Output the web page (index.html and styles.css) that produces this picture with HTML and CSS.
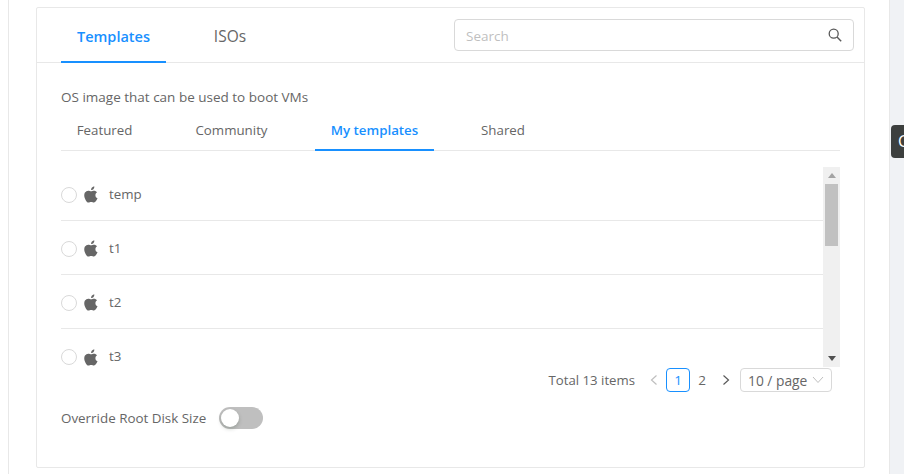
FILE: index.html
```html
<!DOCTYPE html>
<html lang="en">
<head>
<meta charset="utf-8">
<title>Templates</title>
<link rel="stylesheet" href="styles.css">
</head>
<body>
<div class="page">
  <main class="main">
    <section class="card">
      <header class="card-head">
        <nav class="top-tabs">
          <a class="top-tab active">Templates</a>
          <a class="top-tab">ISOs</a>
        </nav>
        <div class="search">
          <span class="search-text">Search</span>
          <svg class="search-icon" width="14" height="14" viewBox="0 0 14 14"><circle cx="5.7" cy="5.7" r="4.5" fill="none" stroke="#595959" stroke-width="1.3"/><path d="M9 9l4.2 4.2" stroke="#595959" stroke-width="1.4" fill="none"/></svg>
        </div>
      </header>
      <div class="card-body">
        <p class="desc">OS image that can be used to boot VMs</p>
        <nav class="sub-tabs">
          <a class="sub-tab t1">Featured</a>
          <a class="sub-tab t2">Community</a>
          <a class="sub-tab t3 active">My templates</a>
          <a class="sub-tab t4">Shared</a>
        </nav>
        <div class="list-wrap">
          <ul class="list">
            <li class="row"><span class="radio"></span><svg class="apple" viewBox="0.5 0 15 18" preserveAspectRatio="none"><path d="M11.6 0.4c.1 1-.3 2-.9 2.700-.6.7-1.600 1.300-2.600 1.200-.1-1 .4-2 .9-2.600.6-.7 1.700-1.300 2.600-1.300zM15 13c-.4 1-.6 1.400-1.100 2.200-.7 1.100-1.700 2.400-2.900 2.400-1.100 0-1.300-.7-2.800-.7-1.500 0-1.800.7-2.900.7-1.200 0-2.100-1.200-2.800-2.300C.5 12.300 .3 8.800 1.500 7 2.400 5.700 3.700 4.900 5 4.900c1.300 0 2.100.7 3.200.7 1 0 1.700-.7 3.200-.7 1.100 0 2.300.6 3.200 1.700-2.800 1.500-2.300 5.400.4 6.400z" fill="#666"/></svg><span class="name">temp</span></li>
            <li class="row"><span class="radio"></span><svg class="apple" viewBox="0.5 0 15 18" preserveAspectRatio="none"><path d="M11.6 0.4c.1 1-.3 2-.9 2.700-.6.7-1.600 1.300-2.600 1.200-.1-1 .4-2 .9-2.600.6-.7 1.700-1.300 2.600-1.300zM15 13c-.4 1-.6 1.400-1.100 2.200-.7 1.100-1.700 2.400-2.900 2.400-1.100 0-1.300-.7-2.800-.7-1.500 0-1.800.7-2.900.7-1.200 0-2.100-1.200-2.800-2.300C.5 12.300 .3 8.800 1.500 7 2.400 5.700 3.700 4.900 5 4.900c1.300 0 2.100.7 3.200.7 1 0 1.700-.7 3.200-.7 1.100 0 2.300.6 3.200 1.700-2.800 1.500-2.300 5.400.4 6.400z" fill="#666"/></svg><span class="name">t1</span></li>
            <li class="row"><span class="radio"></span><svg class="apple" viewBox="0.5 0 15 18" preserveAspectRatio="none"><path d="M11.6 0.4c.1 1-.3 2-.9 2.700-.6.7-1.600 1.300-2.600 1.200-.1-1 .4-2 .9-2.600.6-.7 1.700-1.300 2.600-1.300zM15 13c-.4 1-.6 1.400-1.100 2.200-.7 1.100-1.700 2.400-2.900 2.400-1.100 0-1.300-.7-2.800-.7-1.500 0-1.800.7-2.900.7-1.200 0-2.100-1.200-2.800-2.300C.5 12.300 .3 8.800 1.500 7 2.400 5.700 3.700 4.900 5 4.900c1.300 0 2.100.7 3.200.7 1 0 1.700-.7 3.200-.7 1.100 0 2.300.6 3.200 1.700-2.800 1.500-2.300 5.400.4 6.400z" fill="#666"/></svg><span class="name">t2</span></li>
            <li class="row"><span class="radio"></span><svg class="apple" viewBox="0.5 0 15 18" preserveAspectRatio="none"><path d="M11.6 0.4c.1 1-.3 2-.9 2.700-.6.7-1.600 1.300-2.600 1.200-.1-1 .4-2 .9-2.600.6-.7 1.700-1.300 2.600-1.300zM15 13c-.4 1-.6 1.400-1.100 2.200-.7 1.100-1.700 2.400-2.900 2.400-1.100 0-1.300-.7-2.800-.7-1.500 0-1.800.7-2.900.7-1.200 0-2.100-1.200-2.800-2.300C.5 12.300 .3 8.800 1.500 7 2.400 5.700 3.700 4.900 5 4.900c1.300 0 2.100.7 3.200.7 1 0 1.700-.7 3.200-.7 1.100 0 2.300.6 3.200 1.700-2.800 1.500-2.300 5.400.4 6.400z" fill="#666"/></svg><span class="name">t3</span></li>
          </ul>
          <div class="scrollbar">
            <span class="arrow up"></span>
            <span class="thumb"></span>
            <span class="arrow down"></span>
          </div>
        </div>
        <div class="pagination">
          <span class="total">Total 13 items</span>
          <svg class="chev prev" width="10" height="12" viewBox="0 0 10 12"><path d="M7.500 1.500L2.500 6l5 4.500" fill="none" stroke="#bfbfbf" stroke-width="1.200"/></svg>
          <span class="page-num current">1</span>
          <span class="page-num">2</span>
          <svg class="chev next" width="10" height="12" viewBox="0 0 10 12"><path d="M2.500 1.500L7.500 6l-5 4.500" fill="none" stroke="#595959" stroke-width="1.200"/></svg>
          <span class="size-select">10 / page<svg width="12" height="8" viewBox="0 0 12 8"><path d="M1 1l5 5.500L11 1" fill="none" stroke="#bfbfbf" stroke-width="1"/></svg></span>
        </div>
        <div class="override">
          <span class="override-label">Override Root Disk Size</span>
          <span class="switch"><span class="knob"></span></span>
        </div>
      </div>
    </section>
  </main>
  <aside class="side"><span class="side-tab">C</span></aside>
</div>
</body>
</html>
```

FILE: styles.css
```css
* { box-sizing: border-box; }
html, body { margin: 0; padding: 0; height: 100%; background: #fff; overflow: hidden; }
body { font-family: "Open Sans", "Noto Sans", sans-serif; font-size: 13.5px; color: #666; }
.page { display: flex; height: 474px; width: 904px; }
.main { width: 881px; margin-left: 8px; border-left: 1px solid #e8e8e8; padding: 7px 24px 0 27px; }
.card { height: 461px; border: 1px solid #e8e8e8; border-radius: 2px; }
.card-head { height: 55px; border-bottom: 1px solid #e8e8e8; display: flex; justify-content: space-between; padding: 11px 10px 0 24px; }
.top-tabs { display: flex; gap: 16px; height: 44px; }
.top-tab { width: 105px; text-align: center; font-size: 15.5px; line-height: 35px; color: #666; }
.top-tab.active { color: #1890ff; font-size: 14.5px; font-weight: 600; border-bottom: 2px solid #1890ff; }
.top-tab + .top-tab { width: 96px; }
.search { width: 400px; height: 32px; border: 1px solid #d9d9d9; border-radius: 4px; display: flex; align-items: center; justify-content: space-between; padding: 0 11px; }
.search-text { color: #bfbfbf; font-size: 13.5px; padding-top: 2px; }
.card-body { padding: 0 24px; }
.desc { margin: 0; padding-top: 24px; height: 52px; line-height: 20px; }
.sub-tabs { display: flex; height: 36px; border-bottom: 1px solid #e8e8e8; }
.sub-tab { line-height: 30px; text-align: center; font-size: 13.3px; color: #666; }
.t1 { width: 87px; }
.t2 { width: 125px; margin-left: 21px; }
.t3 { width: 119px; margin-left: 21px; }
.t4 { width: 138px; }
.sub-tab.active { color: #1890ff; font-weight: 600; height: 36px; border-bottom: 2px solid #1890ff; }
.list-wrap { display: flex; height: 200px; margin-top: 16px; }
.list { list-style: none; margin: 0; padding: 0; width: 762px; height: 200px; overflow: hidden; }
.row { height: 54px; padding-top: 2px; display: flex; align-items: center; border-bottom: 1px solid #e8e8e8; font-size: 13.3px; }
.row:last-child { border-bottom: 0; }
.radio { width: 16px; height: 16px; border: 1px solid #d9d9d9; border-radius: 50%; margin-right: 7px; }
.apple { margin-right: 11px; width: 14px; height: 17px; }
.name { margin-top: -2px; }
.scrollbar { width: 17px; background: #f0f0f0; display: flex; flex-direction: column; align-items: center; justify-content: space-between; position: relative; }
.arrow { width: 0; height: 0; border-left: 4px solid transparent; border-right: 4px solid transparent; margin: 6px 0; }
.up { border-bottom: 5px solid #a3a3a3; }
.down { border-top: 5px solid #505050; }
.thumb { position: absolute; top: 17px; left: 2px; width: 13px; height: 62px; background: #c1c1c1; }
.pagination { display: flex; align-items: center; justify-content: flex-end; height: 24px; margin-top: 1px; padding-right: 8px; }
.total { margin-right: 14px; font-size: 13.2px; }
.chev.prev { margin: 0 7px 0 0; }
.chev.next { margin: 0 5px 0 7px; }
.page-num { width: 24px; height: 24px; line-height: 22px; text-align: center; border: 1px solid transparent; border-radius: 4px; }
.page-num.current { border-color: #1890ff; color: #1890ff; }
.size-select { width: 92px; height: 24px; margin-left: 4px; border: 1px solid #d9d9d9; border-radius: 4px; display: flex; align-items: center; justify-content: space-between; padding: 0 7px; font-size: 13.8px; }
.override { display: flex; align-items: center; margin-top: 14px; height: 24px; }
.override-label { margin-right: 13px; font-size: 13.4px; }
.switch { width: 44px; height: 22px; border-radius: 11px; background: #bfbfbf; position: relative; display: block; }
.knob { position: absolute; top: 2px; left: 2px; width: 18px; height: 18px; border-radius: 50%; background: #fff; box-shadow: 0 2px 4px rgba(0,35,11,.2); }
.side { width: 15px; background: #f0f2f5; border-left: 1px solid #e8e8e8; position: relative; overflow: hidden; }
.side-tab { position: absolute; left: 1px; top: 125px; width: 40px; height: 33px; background: #3c3f3e; border-radius: 4px; color: #fff; font-size: 16px; line-height: 33px; padding-left: 7px; }
```
